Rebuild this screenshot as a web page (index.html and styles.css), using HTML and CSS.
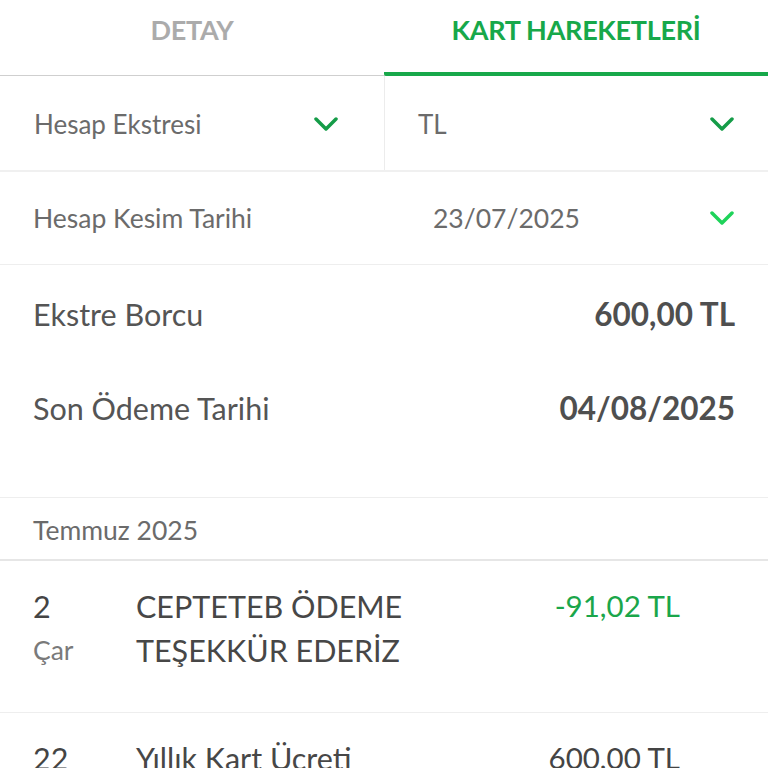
FILE: index.html
```html
<!DOCTYPE html>
<html lang="tr">
<head>
    <meta charset="UTF-8">
    <meta name="viewport" content="width=device-width, initial-scale=1.0">
    <title>Kart Hareketleri</title>
    <link rel="stylesheet" href="styles.css">
</head>
<body>
    <nav class="tabs">
        <div class="tab">DETAY</div>
        <div class="tab active">KART HAREKETLERİ</div>
    </nav>

    <div class="filters">
        <div class="filter">
            <span>Hesap Ekstresi</span>
            <svg class="chev" viewBox="0 0 24 14"><path d="M2 2l10 10 10-10"/></svg>
        </div>
        <div class="filter">
            <span>TL</span>
            <svg class="chev" viewBox="0 0 24 14"><path d="M2 2l10 10 10-10"/></svg>
        </div>
    </div>

    <div class="cutoff">
        <span class="cutoff-label">Hesap Kesim Tarihi</span>
        <span class="cutoff-date">23/07/2025</span>
        <svg class="chev light" viewBox="0 0 24 14"><path d="M2 2l10 10 10-10"/></svg>
    </div>

    <div class="summary">
        <div class="sum-row">
            <span>Ekstre Borcu</span>
            <b>600,00 TL</b>
        </div>
        <div class="sum-row">
            <span>Son Ödeme Tarihi</span>
            <b>04/08/2025</b>
        </div>
    </div>

    <div class="month">Temmuz 2025</div>

    <div class="tx">
        <div class="tx-day">
            <div class="num">2</div>
            <div class="wd">Çar</div>
        </div>
        <div class="tx-desc">CEPTETEB ÖDEME<br>TEŞEKKÜR EDERİZ</div>
        <div class="tx-amt plus">-91,02 TL</div>
    </div>
    <div class="tx">
        <div class="tx-day">
            <div class="num">22</div>
            <div class="wd">Per</div>
        </div>
        <div class="tx-desc">Yıllık Kart Ücreti</div>
        <div class="tx-amt">600,00 TL</div>
    </div>
</body>
</html>
```

FILE: styles.css
```css
*{
    margin: 0;
    padding: 0;
    box-sizing: border-box;
}
body{
    font-family: Lato, "Open Sans", sans-serif;
    background-color: white;
    color: #4a4a4a;
    width: 768px;
    height: 768px;
    overflow: hidden;
}
.tabs{
    display: flex;
    height: 76px;
    border-bottom: 1px solid #cfcfcf;
}
.tab{
    width: 50%;
    text-align: center;
    font-size: 27px;
    font-weight: bold;
    color: #ababab;
    padding-top: 13px;
    letter-spacing: -0.3px;
}
.tab.active{
    color: #17a84a;
    border-bottom: 4px solid #17a84a;
    border-radius: 2px 0 0 2px;
    margin-bottom: -1px;
}
.filters{
    display: flex;
    height: 96px;
    border-bottom: 2px solid #f0f0f0;
}
.filter{
    width: 50%;
    flex: none;
    display: flex;
    align-items: center;
    justify-content: space-between;
    font-size: 26px;
    color: #6b6b6b;
    padding: 2px 46px 0 34px;
}
.filter + .filter{
    border-left: 1px solid #ececec;
    padding-left: 33px;
    padding-right: 34px;
}
.chev{
    width: 24px;
    height: 14px;
    fill: none;
    stroke: #159c48;
    stroke-width: 3.5;
    stroke-linecap: round;
    stroke-linejoin: round;
}
.chev.light{
    stroke: #1fd35a;
}
.cutoff{
    display: flex;
    align-items: center;
    height: 93px;
    padding: 0 34px 0 33px;
    border-bottom: 1px solid #eeeeee;
    font-size: 26.5px;
    color: #6b6b6b;
}
.cutoff-label{
    width: 400px;
}
.cutoff-date{
    flex: 1;
}
.summary{
    padding: 2px 33px 42px 33px;
    border-bottom: 1px solid #eeeeee;
}
.sum-row{
    display: flex;
    justify-content: space-between;
    align-items: center;
    height: 94px;
    font-size: 30.5px;
    color: #555555;
}
.sum-row b{
    font-weight: bold;
    font-size: 31.5px;
    color: #4f4f4f;
}
.month{
    height: 63px;
    padding: 16px 33px 0;
    font-size: 26.5px;
    color: #6b6b6b;
    border-bottom: 2px solid #e6e6e6;
}
.tx{
    display: flex;
    padding: 23px 88px 40px 33px;
    border-bottom: 1px solid #eeeeee;
    font-size: 30.5px;
}
.tx-day{
    width: 103px;
}
.num{
    color: #444444;
    line-height: 44px;
}
.wd{
    color: #7a7a7a;
    font-size: 26.5px;
    line-height: 44px;
}
.tx-desc{
    flex: 1;
    color: #474747;
    line-height: 44px;
}
.tx-amt{
    line-height: 44px;
    font-size: 29.5px;
    color: #444444;
}
.tx-amt.plus{
    color: #1aa64a;
}
```
